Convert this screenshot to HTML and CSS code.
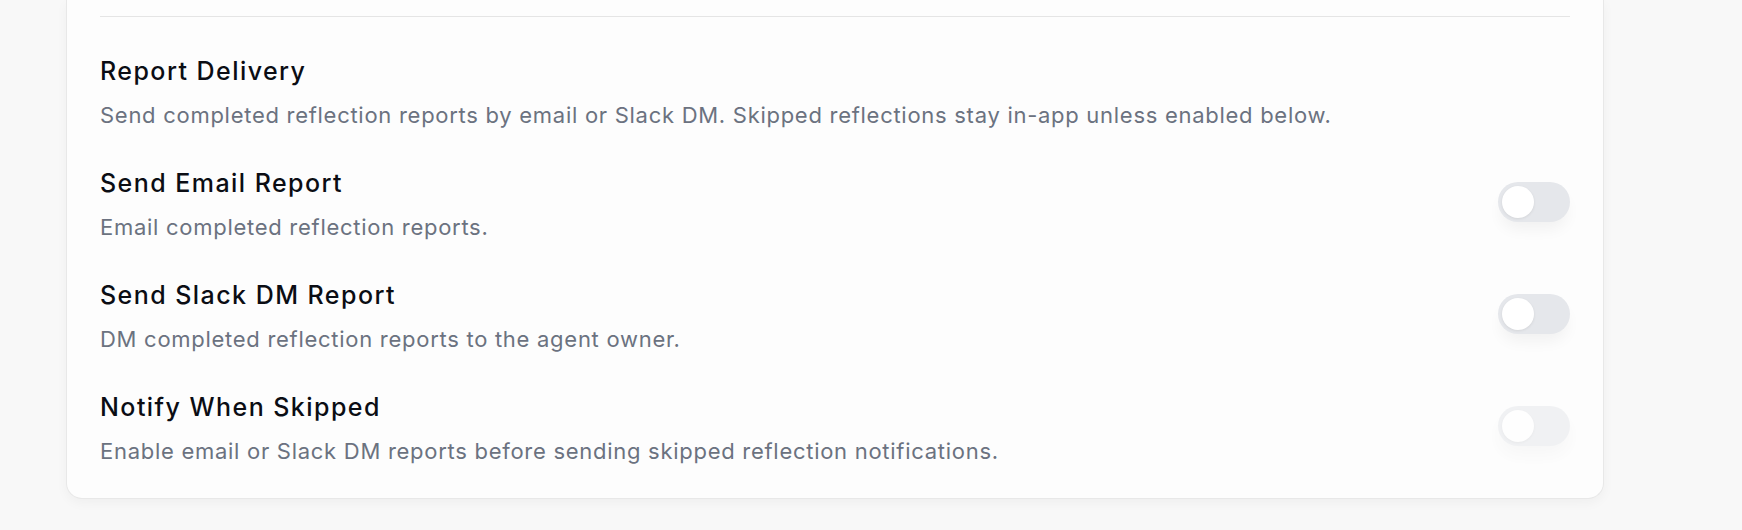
FILE: index.html
```html
<html lang="en">
<head>
    <meta charset="UTF-8">
    <meta name="viewport" content="width=device-width, initial-scale=1.0">
    <title>Report Delivery</title>
    <link rel="stylesheet" href="styles.css">
</head>
<body>
    <div class="page">
        <div class="card">
            <div class="section">
                <div class="section-head">
                    <div class="title">Report Delivery</div>
                    <div class="desc">Send completed reflection reports by email or Slack DM. Skipped reflections stay in-app unless enabled below.</div>
                </div>

                <div class="row">
                    <div class="row-text">
                        <div class="title">Send Email Report</div>
                        <div class="desc">Email completed reflection reports.</div>
                    </div>
                    <button class="switch" role="switch" aria-checked="false"><span class="knob"></span></button>
                </div>

                <div class="row">
                    <div class="row-text">
                        <div class="title">Send Slack DM Report</div>
                        <div class="desc">DM completed reflection reports to the agent owner.</div>
                    </div>
                    <button class="switch" role="switch" aria-checked="false"><span class="knob"></span></button>
                </div>

                <div class="row">
                    <div class="row-text">
                        <div class="title">Notify When Skipped</div>
                        <div class="desc">Enable email or Slack DM reports before sending skipped reflection notifications.</div>
                    </div>
                    <button class="switch" role="switch" aria-checked="false" disabled><span class="knob"></span></button>
                </div>
            </div>
        </div>
    </div>
</body>
</html>
```

FILE: styles.css
```css
body {
    margin: 0;
    font-family: Inter, "Noto Sans", sans-serif;
    background-color: #f8f8f8;
}
.page {
    padding-left: 66px;
}
.card {
    box-sizing: border-box;
    width: 1538px;
    background-color: #fdfdfd;
    border: 1px solid #e8e8e8;
    border-top: none;
    border-radius: 0 0 16px 16px;
    padding: 16px 33px 33px;
    box-shadow: 0 4px 12px rgba(0, 0, 0, 0.04);
}
.section {
    border-top: 1px solid #e5e5e5;
    padding-top: 38px;
    display: flex;
    flex-direction: column;
    gap: 38px;
}
.title {
    font-size: 25px;
    line-height: 32px;
    font-weight: 500;
    letter-spacing: 1.45px;
    color: #0b0d14;
}
.desc {
    margin-top: 14px;
    font-size: 22px;
    line-height: 28px;
    letter-spacing: 0.72px;
    color: #6b7280;
}
.row {
    display: flex;
    justify-content: space-between;
    align-items: center;
}
.switch {
    position: relative;
    width: 72px;
    height: 40px;
    margin-bottom: 4px;
    padding: 0;
    border: none;
    border-radius: 20px;
    background-color: #e5e7eb;
    box-shadow: 0 10px 15px -3px rgba(0, 0, 0, 0.05);
    cursor: pointer;
}
.switch:disabled {
    opacity: 0.5;
    cursor: not-allowed;
}
.knob {
    position: absolute;
    top: 4px;
    left: 4px;
    width: 32px;
    height: 32px;
    border-radius: 50%;
    background-color: #ffffff;
    box-shadow: 0 1px 3px rgba(0, 0, 0, 0.08);
}
```
